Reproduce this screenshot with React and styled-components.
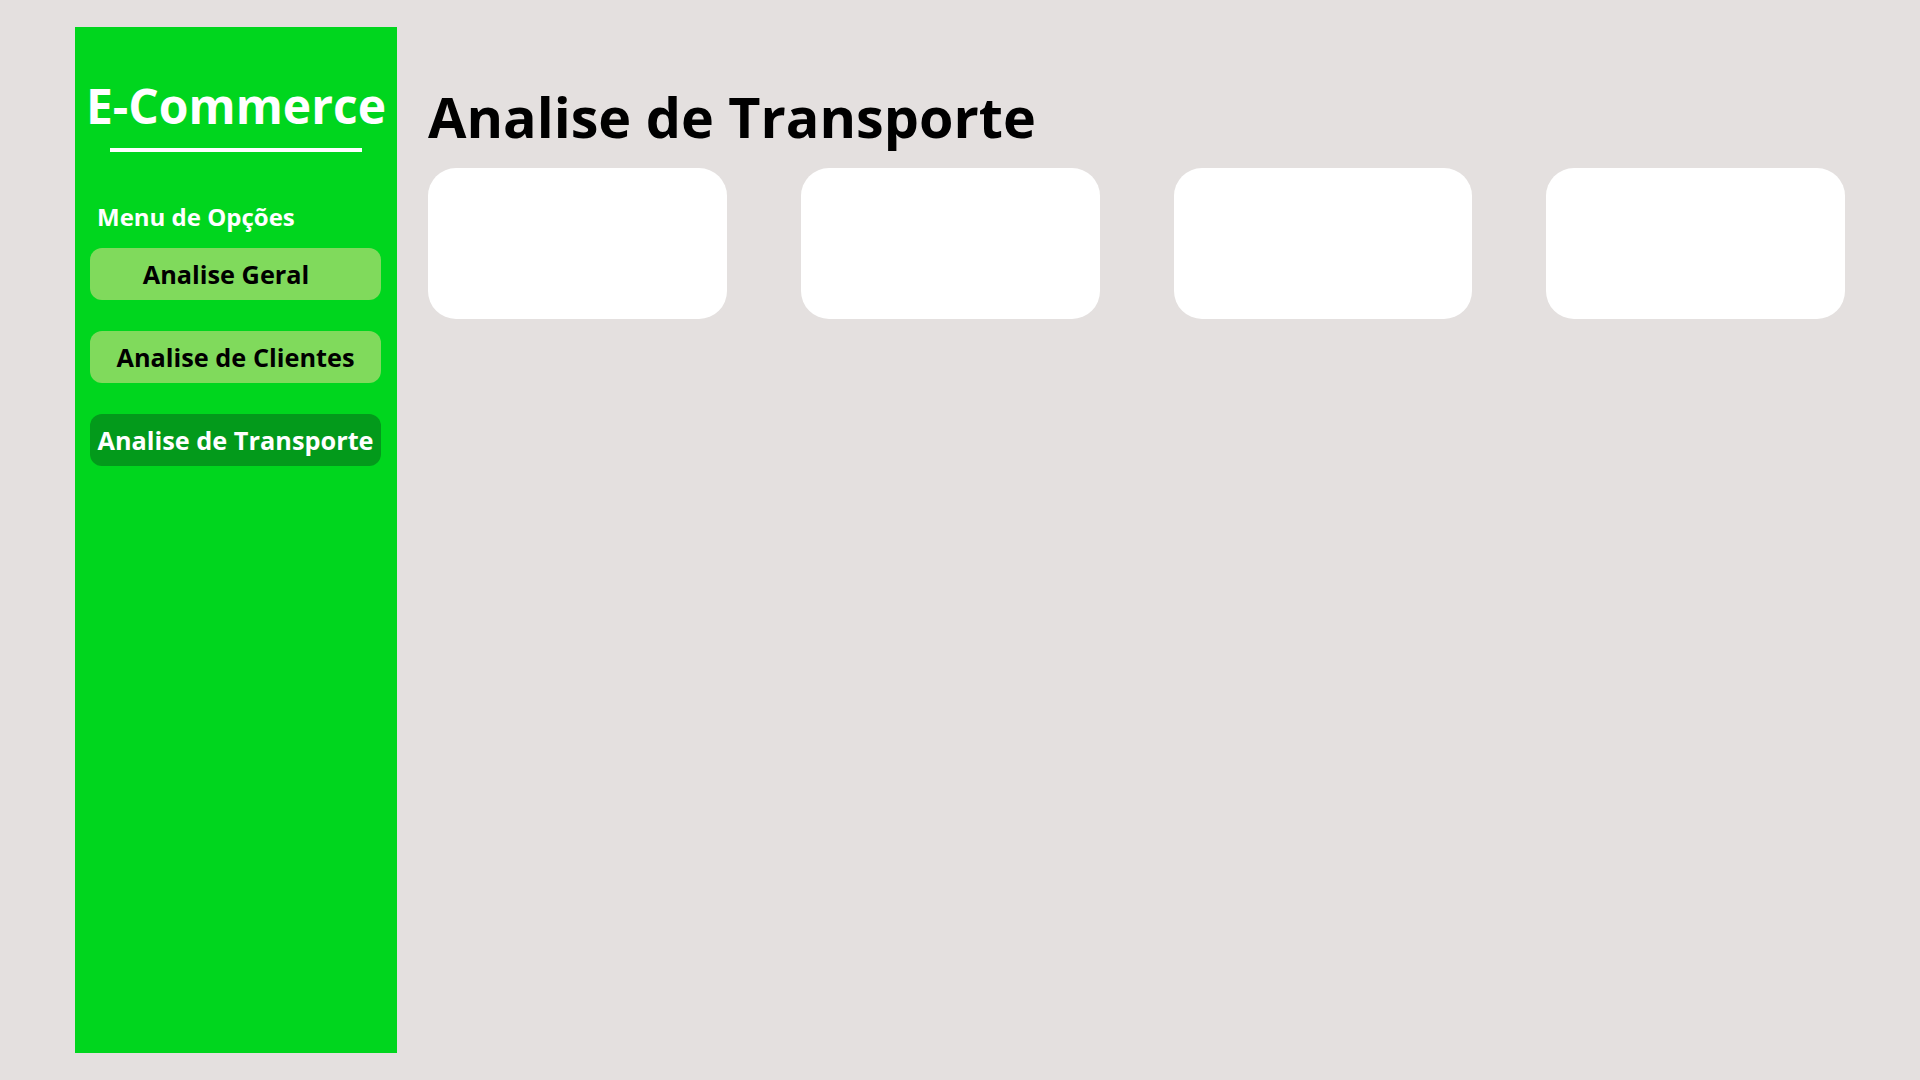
import React from "react";
import styled, { createGlobalStyle } from "styled-components";

const GlobalStyle = createGlobalStyle`
  html, body {
    margin: 0;
    padding: 0;
    background: #e4e0df;
    font-family: "Open Sans", "Noto Sans", sans-serif;
  }
  * { box-sizing: border-box; }
`;

const Page = styled.div`
  display: flex;
  gap: 31px;
  min-height: 100vh;
  padding: 27px 75px;
`;

const Sidebar = styled.aside`
  width: 322px;
  flex-shrink: 0;
  background: #00d61e;
  display: flex;
  flex-direction: column;
  padding-top: 55px;
`;

const Brand = styled.h1`
  margin: 0;
  font-size: 48px;
  line-height: 48px;
  font-weight: 700;
  color: #ffffff;
  text-align: center;
  white-space: nowrap;
`;

const Divider = styled.div`
  width: 252px;
  height: 4px;
  margin: 18px auto 0;
  background: #ffffff;
`;

const MenuLabel = styled.div`
  margin-top: 53px;
  padding-left: 22px;
  font-size: 24px;
  line-height: 24px;
  font-weight: 700;
  color: #ffffff;
`;

const Nav = styled.nav`
  display: flex;
  flex-direction: column;
  gap: 31px;
  margin-top: 19px;
  padding: 0 16px 0 15px;
`;

const NavButton = styled.button`
  height: 52px;
  border: none;
  border-radius: 12px;
  display: flex;
  align-items: center;
  justify-content: center;
  padding: 0 ${(p) => p.$shift || 0}px 0 0;
  font-family: inherit;
  font-size: 25.3px;
  font-weight: 700;
  white-space: nowrap;
  cursor: pointer;
  background: ${(p) => (p.$active ? "#039a1b" : "#80da5c")};
  color: ${(p) => (p.$active ? "#ffffff" : "#000000")};
`;

const Main = styled.main`
  flex: 1;
  padding-top: 61px;
`;

const Title = styled.h2`
  margin: 0 0 24px;
  font-size: 55.7px;
  line-height: 56px;
  font-weight: 700;
  color: #000000;
`;

const Cards = styled.div`
  display: grid;
  grid-template-columns: repeat(4, 1fr);
  gap: 74px;
`;

const Card = styled.div`
  height: 151px;
  background: #ffffff;
  border-radius: 28px;
`;

const items = [
  { label: "Analise Geral", shift: 19 },
  { label: "Analise de Clientes" },
  { label: "Analise de Transporte", active: true },
];

export default function App() {
  return (
    <>
      <GlobalStyle />
      <Page>
        <Sidebar>
          <Brand>E-Commerce</Brand>
          <Divider />
          <MenuLabel>Menu de Opções</MenuLabel>
          <Nav>
            {items.map((it) => (
              <NavButton key={it.label} $active={it.active} $shift={it.shift}>
                {it.label}
              </NavButton>
            ))}
          </Nav>
        </Sidebar>
        <Main>
          <Title>Analise de Transporte</Title>
          <Cards>
            {[0, 1, 2, 3].map((i) => (
              <Card key={i} />
            ))}
          </Cards>
        </Main>
      </Page>
    </>
  );
}
